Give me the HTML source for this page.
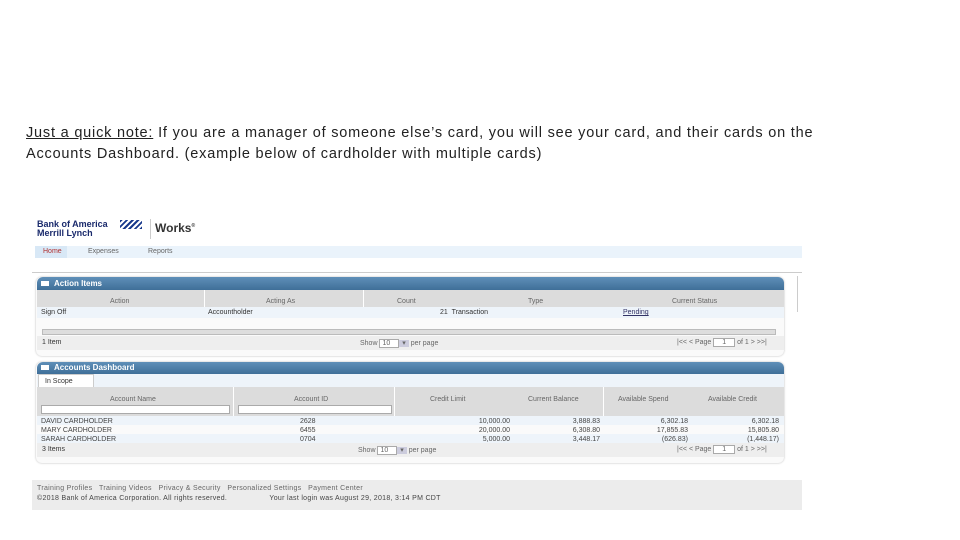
<!DOCTYPE html><html><head><style>
body{margin:0;width:960px;height:540px;background:#fff;position:relative;overflow:hidden;font-family:"Liberation Sans",sans-serif}
.a{position:absolute}
.t{font-size:14.5px;color:#222;left:26px;white-space:nowrap;letter-spacing:0.8px}
.s{font-size:7px;color:#666;white-space:nowrap}
.hd{background:linear-gradient(#5f8fb8,#3f6f98);color:#fff;font-size:8px;font-weight:bold;border-radius:6px 6px 0 0}
.hd b{display:inline-block;width:8px;height:5px;background:#fff;margin:0 5px 0 4px;vertical-align:middle}
</style></head><body>
<div class="a t" style="top:125px"><u>Just a quick note:</u> If you are a manager of someone else’s card, you will see your card, and their cards on the</div>
<div class="a t" style="top:146px">Accounts Dashboard. (example below of cardholder with multiple cards)</div>

<div class="a" style="left:37px;top:220px;font-size:9px;font-weight:bold;color:#1a2a6c;line-height:9px">Bank of America<br>Merrill Lynch</div>
<div class="a" style="left:120px;top:220px;width:22px;height:9px;background:repeating-linear-gradient(135deg,#1a3a8c 0 2px,#fff 2px 4px)"></div>
<div class="a" style="left:150px;top:219px;width:1px;height:20px;background:#ccc"></div>
<div class="a" style="left:155px;top:221px;font-size:12px;font-weight:bold;color:#333">Works<sup style="font-size:5px">®</sup></div>
<div class="a" style="left:35px;top:246px;width:767px;height:12px;background:#eaf3fb"></div>
<div class="a" style="left:35px;top:246px;width:32px;height:12px;background:#d8e8f6"></div>
<div class="a s" style="left:43px;top:248px;color:#b03030">Home</div>
<div class="a s" style="left:88px;top:248px">Expenses</div>
<div class="a s" style="left:148px;top:248px">Reports</div>
<div class="a" style="left:32px;top:272px;width:770px;height:1px;background:#ccc"></div>
<div class="a" style="left:797px;top:276px;width:1px;height:36px;background:#ccc"></div>

<div class="a" style="left:36px;top:277px;width:748px;height:79px;background:#fafafa;border-radius:6px;box-shadow:0 0 2px #bbb"></div>
<div class="a hd" style="left:37px;top:277px;width:747px;height:13px;line-height:13px"><b></b>Action Items</div>
<div class="a" style="left:37px;top:290px;width:747px;height:17px;background:#dcdcdc"></div>
<div class="a" style="left:204px;top:290px;width:1px;height:17px;background:#fff"></div>
<div class="a" style="left:363px;top:290px;width:1px;height:17px;background:#fff"></div>
<div class="a s" style="left:110px;top:298px">Action</div>
<div class="a s" style="left:266px;top:298px">Acting As</div>
<div class="a s" style="left:397px;top:298px">Count</div>
<div class="a s" style="left:528px;top:298px">Type</div>
<div class="a s" style="left:672px;top:298px">Current Status</div>
<div class="a" style="left:37px;top:307px;width:747px;height:11px;background:#eef4fa"></div>
<div class="a s" style="left:41px;top:309px;color:#333">Sign Off</div>
<div class="a s" style="left:208px;top:309px;color:#333">Accountholder</div>
<div class="a s" style="left:440px;top:309px;color:#333">21 &nbsp;Transaction</div>
<div class="a s" style="left:623px;top:309px;color:#336;text-decoration:underline">Pending</div>
<div class="a" style="left:42px;top:329px;width:732px;height:4px;background:#ddd;border:1px solid #bbb"></div>
<div class="a" style="left:37px;top:336px;width:747px;height:14px;background:#eee"></div>
<div class="a s" style="left:42px;top:339px;color:#333">1 Item</div>
<div class="a s" style="left:360px;top:339px">Show <span style="border:1px solid #aaa;background:#fff;padding:0 8px 0 2px">10</span><span style="background:#ccd;padding:0 3px">▾</span> per page</div>
<div class="a s" style="left:677px;top:339px">|&lt;&lt; &lt; Page <span style="border:1px solid #aaa;background:#fff;padding:0 8px">1</span> of 1 &gt; &gt;&gt;|</div>

<div class="a" style="left:36px;top:362px;width:748px;height:101px;background:#fafafa;border-radius:6px;box-shadow:0 0 2px #bbb"></div>
<div class="a hd" style="left:37px;top:362px;width:747px;height:12px;line-height:12px"><b></b>Accounts Dashboard</div>
<div class="a" style="left:37px;top:374px;width:747px;height:13px;background:#eef4fa;border-bottom:1px solid #ccc"></div>
<div class="a s" style="left:38px;top:374px;width:48px;height:13px;background:#fff;border:1px solid #ccc;border-bottom:none;line-height:13px;padding-left:6px;color:#333">In Scope</div>
<div class="a" style="left:37px;top:387px;width:747px;height:29px;background:#dcdcdc"></div>
<div class="a" style="left:233px;top:387px;width:1px;height:29px;background:#fff"></div>
<div class="a" style="left:394px;top:387px;width:1px;height:29px;background:#fff"></div>
<div class="a" style="left:603px;top:387px;width:1px;height:29px;background:#fff"></div>
<div class="a" style="left:41px;top:405px;width:187px;height:7px;background:#fff;border:1px solid #aaa"></div>
<div class="a" style="left:238px;top:405px;width:152px;height:7px;background:#fff;border:1px solid #aaa"></div>
<div class="a s" style="left:110px;top:396px">Account Name</div>
<div class="a s" style="left:294px;top:396px">Account ID</div>
<div class="a s" style="left:430px;top:396px">Credit Limit</div>
<div class="a s" style="left:528px;top:396px">Current Balance</div>
<div class="a s" style="left:618px;top:396px">Available Spend</div>
<div class="a s" style="left:708px;top:396px">Available Credit</div>
<div class="a" style="left:37px;top:416px;width:747px;height:9px;background:#eef4fa"></div>
<div class="a" style="left:37px;top:434px;width:747px;height:9px;background:#eef4fa"></div>
<div class="a s" style="left:41px;top:417px;color:#444;line-height:9px">DAVID CARDHOLDER<br>MARY CARDHOLDER<br>SARAH CARDHOLDER</div>
<div class="a s" style="left:300px;top:417px;color:#444;line-height:9px">2628<br>6455<br>0704</div>
<div class="a s" style="left:470px;top:417px;width:40px;text-align:right;color:#444;line-height:9px">10,000.00<br>20,000.00<br>5,000.00</div>
<div class="a s" style="left:560px;top:417px;width:40px;text-align:right;color:#444;line-height:9px">3,888.83<br>6,308.80<br>3,448.17</div>
<div class="a s" style="left:648px;top:417px;width:40px;text-align:right;color:#444;line-height:9px">6,302.18<br>17,855.83<br>(626.83)</div>
<div class="a s" style="left:735px;top:417px;width:44px;text-align:right;color:#444;line-height:9px">6,302.18<br>15,805.80<br>(1,448.17)</div>
<div class="a" style="left:37px;top:443px;width:747px;height:14px;background:#eee"></div>
<div class="a s" style="left:42px;top:446px;color:#333">3 Items</div>
<div class="a s" style="left:358px;top:446px">Show <span style="border:1px solid #aaa;background:#fff;padding:0 8px 0 2px">10</span><span style="background:#ccd;padding:0 3px">▾</span> per page</div>
<div class="a s" style="left:677px;top:446px">|&lt;&lt; &lt; Page <span style="border:1px solid #aaa;background:#fff;padding:0 8px">1</span> of 1 &gt; &gt;&gt;|</div>

<div class="a" style="left:32px;top:480px;width:770px;height:30px;background:#ececec"></div>
<div class="a s" style="left:37px;top:485px;font-size:7px;letter-spacing:0.3px">Training Profiles &nbsp; Training Videos &nbsp; Privacy &amp; Security &nbsp; Personalized Settings &nbsp; Payment Center</div>
<div class="a s" style="left:37px;top:495px;font-size:7px;color:#444;letter-spacing:0.3px">©2018 Bank of America Corporation. All rights reserved. <span style="margin-left:40px">Your last login was August 29, 2018, 3:14 PM CDT</span></div>
</body></html>
